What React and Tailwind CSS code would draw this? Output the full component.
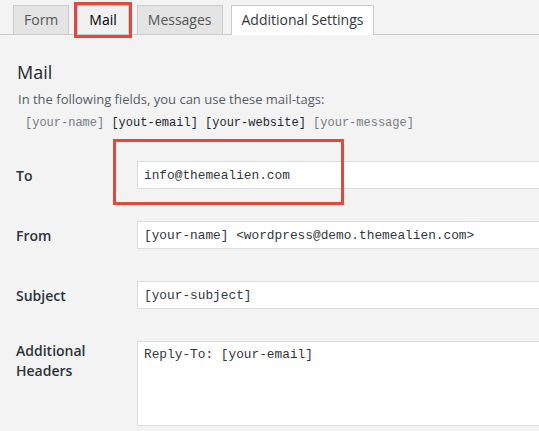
import React from 'react';

const tabs = [
  { name: 'Form', state: 'idle' },
  { name: 'Mail', state: 'marked' },
  { name: 'Messages', state: 'idle' },
  { name: 'Additional Settings', state: 'active' },
];

const tags = [
  { tag: '[your-name]', used: false },
  { tag: '[yout-email]', used: true },
  { tag: '[your-website]', used: true },
  { tag: '[your-message]', used: false },
];

const Field = ({ label, value }) => (
  <div className="flex items-center h-[28px]">
    <label className="w-[121px] shrink-0 text-[14px] font-semibold text-[#2c3338]">{label}</label>
    <input
      readOnly
      value={value}
      className="w-[440px] h-[28px] shrink-0 bg-white border border-[#dcdcdc] px-[6px] font-['Liberation_Mono',monospace] text-[12.8px] text-[#32373c] outline-none"
    />
  </div>
);

const App = () => {
  return (
    <div className="relative w-[539px] h-[431px] overflow-hidden bg-[#f3f3f3] font-['Open_Sans',sans-serif]">
      {/* tabs */}
      <div className="flex items-end gap-2 pl-[13px] pt-[5px] border-b border-[#cccccc]">
        {tabs.map((t) => (
          <div
            key={t.name}
            className={
              t.state === 'active'
                ? 'relative h-[30px] -mb-px px-[10px] border border-b-0 border-[#cccccc] bg-white text-[14px] leading-[28px] text-[#32373c]'
                : t.state === 'marked'
                ? 'relative h-[29px] px-[11px] border border-b-0 border-[#cccccc] bg-[#f1f1f1] text-[14px] leading-[28px] font-medium text-black'
                : 'relative h-[29px] px-[10px] border border-b-0 border-[#cccccc] bg-[#e4e4e4] text-[14px] leading-[28px] text-[#555]'
            }
          >
            {t.name}
            {t.state === 'marked' && (
              <span className="absolute -inset-[4px] border-[3px] border-[#e5473d]" />
            )}
          </div>
        ))}
      </div>

      <div className="pl-[17px]">
        <h2 className="mt-[25px] text-[18px] leading-[24px] font-normal text-[#23282d]">Mail</h2>
        <p className="mt-[6px] pl-px text-[13px] leading-[18px] text-[#555d66]">
          In the following fields, you can use these mail-tags:
        </p>
        <p className="mt-[6px] pl-[8px] font-['Liberation_Mono',monospace] text-[12px] leading-[18px] whitespace-pre">
          {tags.map((t, i) => (
            <span key={t.tag} className={t.used ? 'text-[#23282d]' : 'text-[#777c82]'}>
              {t.tag}
              {i < tags.length - 1 ? ' ' : ''}
            </span>
          ))}
        </p>
      </div>

      <div className="flex flex-col gap-[32px] pl-[16px] mt-[29px]">
        <Field label="To" value="info@themealien.com" />
        <Field label="From" value="[your-name] <wordpress@demo.themealien.com>" />
        <Field label="Subject" value="[your-subject]" />
        <div className="flex items-start">
          <label className="w-[121px] shrink-0 pt-0 text-[14px] leading-[20px] font-semibold text-[#2c3338]">
            Additional
            <br />
            Headers
          </label>
          <textarea
            readOnly
            value="Reply-To: [your-email]"
            className="w-[440px] h-[85px] shrink-0 resize-none bg-white border border-[#dcdcdc] px-[6px] pt-[4px] font-['Liberation_Mono',monospace] text-[12.8px] leading-[18px] text-[#32373c] outline-none"
          />
        </div>
      </div>

      {/* annotation around the To field */}
      <div className="absolute left-[113px] top-[139px] w-[231px] h-[66px] border-[3px] border-[#e5473d]" />
    </div>
  );
};

export default App;
